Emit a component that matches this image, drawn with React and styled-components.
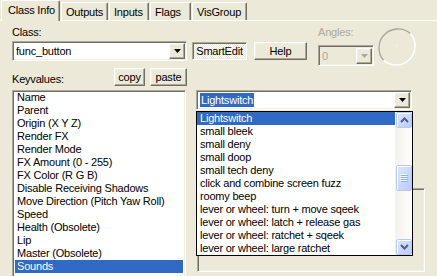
import React from 'react';
import styled, { createGlobalStyle, css } from 'styled-components';

const Global = createGlobalStyle`
  html, body { margin: 0; padding: 0; background: #ECE9D8; overflow: hidden; }
  body { font-family: "Liberation Sans", Arial, sans-serif; font-size: 11px; letter-spacing: -0.2px; color: #000; }
  #root { width: 437px; height: 276px; overflow: hidden; }
`;

const raised = css`
  border: 1px solid;
  border-color: #fff #716F64 #716F64 #fff;
  box-shadow: inset -1px -1px #ACA899, inset 1px 1px #F1EFE2;
  background: #ECE9D8;
`;

const sunken = css`
  border: 1px solid;
  border-color: #ACA899 #fff #fff #ACA899;
  box-shadow: inset 1px 1px #716F64, inset -1px -1px #F1EFE2;
`;

const Window = styled.div`
  width: 437px;
  height: 276px;
  overflow: hidden;
  background: #ECE9D8;
  box-sizing: border-box;
  * { box-sizing: border-box; }
`;

const TabStrip = styled.div`
  display: flex;
  align-items: flex-end;
  height: 21px;
  border-bottom: 1px solid #fff;
`;

const Tab = styled.div`
  width: ${p => p.$w}px;
  margin-left: ${p => p.$ml}px;
  height: ${p => (p.$active ? 21 : 18)}px;
  margin-bottom: ${p => (p.$active ? -1 : 0)}px;
  padding-left: ${p => (p.$active ? 6 : 4)}px;
  padding-top: 2px;
  line-height: 14px;
  font-size: 11px;
  white-space: nowrap;
  background: #ECE9D8;
  border-top: 1px solid #fff;
  border-left: 1px solid #fff;
  border-right: 1px solid #716F64;
  border-radius: 2px 2px 0 0;
  box-shadow: inset -1px 0 #ACA899;
  position: relative;
  z-index: ${p => (p.$active ? 1 : 0)};
`;

const Panel = styled.div`
  padding-left: 12px;
`;

const TopRow = styled.div`
  display: flex;
  align-items: flex-start;
  margin-top: 5px;
  height: 42px;
`;

const Field = styled.div`
  display: flex;
  flex-direction: column;
  width: ${p => p.$w}px;
  margin-left: ${p => p.$ml || 0}px;
`;

const Label = styled.div`
  height: 13px;
  line-height: 13px;
  margin-bottom: ${p => p.$mb || 2}px;
  color: ${p => (p.$disabled ? '#ACA899' : '#000')};
  white-space: nowrap;
`;

const Combo = styled.div`
  ${sunken};
  display: flex;
  align-items: center;
  height: ${p => p.$h || 20}px;
  width: ${p => (p.$w ? p.$w + 'px' : '100%')};
  background: ${p => (p.$disabled ? '#ECE9D8' : '#fff')};
  padding: 2px;
  color: ${p => (p.$disabled ? '#ACA899' : '#000')};
`;

const ComboText = styled.div`
  flex: 1;
  line-height: 14px;
  padding-left: 1px;
  white-space: nowrap;
  overflow: hidden;
`;

const Selected = styled.span`
  background: #316AC5;
  color: #fff;
  padding: 0 1px;
  display: inline-block;
  line-height: 14px;
`;

const ArrowBtn = styled.div`
  ${raised};
  width: 16px;
  height: 16px;
  flex: none;
  display: flex;
  align-items: center;
  justify-content: center;
  margin-right: -1px;
`;

const Button = styled.div`
  ${raised};
  width: ${p => p.$w}px;
  height: 18px;
  margin-left: ${p => p.$ml || 0}px;
  margin-top: ${p => p.$mt || 0}px;
  display: flex;
  align-items: center;
  justify-content: center;
  line-height: 14px;
  flex: none;
`;

const ToggleButton = styled(Button)`
  ${sunken};
  background: repeating-conic-gradient(#fff 0 25%, #ECE9D8 0 50%) 0 0 / 2px 2px;
`;

const Dial = styled.svg`
  margin-left: 3px;
  margin-top: 1px;
  flex: none;
`;

const Lower = styled.div`
  display: grid;
  grid-template-columns: 175px 229px;
  column-gap: 9px;
  row-gap: 4px;
`;

const KvHeader = styled.div`
  display: flex;
  align-items: center;
  height: 18px;
  gap: 5px;
`;

const KvLabel = styled.div`
  flex: 1;
  padding-top: 4px;
`;

const List = styled.div`
  ${sunken};
  background: #fff;
  width: 174px;
  height: 192px;
  padding: 0 2px;
  overflow: hidden;
`;

const Item = styled.div`
  height: 13px;
  line-height: 13px;
  padding-left: ${p => p.$pl || 2}px;
  white-space: nowrap;
  overflow: hidden;
  background: ${p => (p.$sel ? '#316AC5' : 'transparent')};
  color: ${p => (p.$sel ? '#fff' : '#000')};
`;

const RightCol = styled.div`
  position: relative;
  display: flex;
  flex-direction: column;
`;

const CommentBox = styled.div`
  ${sunken};
  margin-top: 78px;
  margin-left: 1px;
  width: 228px;
  height: 84px;
  background: #ECE9D8;
`;

const Dropdown = styled.div`
  position: absolute;
  left: 0;
  top: 21px;
  width: 217px;
  height: 145px;
  border: 1px solid #000;
  background: #fff;
  display: flex;
  z-index: 2;
`;

const DropItems = styled.div`
  width: 198px;
  display: flex;
  flex-direction: column;
`;

const Scroll = styled.div`
  width: 17px;
  display: flex;
  flex-direction: column;
  background: linear-gradient(to right, #F3F1EC, #FEFEFB);
  padding-left: 1px;
`;

const ScrollBtn = styled.div`
  height: 16px;
  width: 16px;
  border: 1px solid #B7CAF5;
  border-radius: 2px;
  background: linear-gradient(to bottom right, #DCE6FD, #B9CCF9);
  box-shadow: inset 1px 1px #fff;
  display: flex;
  align-items: center;
  justify-content: center;
  flex: none;
`;

const Thumb = styled(ScrollBtn)`
  height: 26px;
  margin-top: 37px;
  margin-bottom: auto;
`;

const ChevronUp = () => (
  <svg width="9" height="6" viewBox="0 0 9 6">
    <path d="M1 5 L4.5 1.5 L8 5" fill="none" stroke="#4D6185" strokeWidth="2" />
  </svg>
);
const ChevronDown = () => (
  <svg width="9" height="6" viewBox="0 0 9 6">
    <path d="M1 1 L4.5 4.5 L8 1" fill="none" stroke="#4D6185" strokeWidth="2" />
  </svg>
);
const Grip = () => (
  <svg width="8" height="8" viewBox="0 0 8 8">
    {[0, 2, 4, 6].map(y => (
      <g key={y}>
        <rect x="0" y={y} width="7" height="1" fill="#EEF4FE" />
        <rect x="1" y={y + 1} width="7" height="1" fill="#8CB0F8" />
      </g>
    ))}
  </svg>
);

const Tri = ({ color = '#000' }) => (
  <svg width="7" height="4" viewBox="0 0 7 4">
    <path d="M0 0 H7 L3.5 4 Z" fill={color} />
  </svg>
);

const keys = [
  'Name', 'Parent', 'Origin (X Y Z)', 'Render FX', 'Render Mode', 'FX Amount (0 - 255)',
  'FX Color (R G B)', 'Disable Receiving Shadows', 'Move Direction (Pitch Yaw Roll)', 'Speed',
  'Health (Obsolete)', 'Lip', 'Master (Obsolete)', 'Sounds',
];

const sounds = [
  'Lightswitch', 'small bleek', 'small deny', 'small doop', 'small tech deny',
  'click and combine screen fuzz', 'roomy beep', 'lever or wheel: turn + move sqeek',
  'lever or wheel: latch + release gas', 'lever or wheel: ratchet + sqeek',
  'lever or wheel: large ratchet',
];

export default function App() {
  return (
    <Window>
      <Global />
      <TabStrip>
        <Tab $active $w={59} $ml={1}>Class Info</Tab>
        <Tab $w={47} $ml={1}>Outputs</Tab>
        <Tab $w={40} $ml={1}>Inputs</Tab>
        <Tab $w={41} $ml={1}>Flags</Tab>
        <Tab $w={55} $ml={1}>VisGroup</Tab>
      </TabStrip>
      <Panel>
        <TopRow>
          <Field $w={175}>
            <Label>Class:</Label>
            <Combo>
              <ComboText>func_button</ComboText>
              <ArrowBtn><Tri /></ArrowBtn>
            </Combo>
          </Field>
          <ToggleButton $w={55} $ml={5} $mt={16}>SmartEdit</ToggleButton>
          <Button $w={53} $ml={7} $mt={16}>Help</Button>
          <Field $w={56} $ml={11}>
            <Label $disabled $mb={6}>Angles:</Label>
            <Combo $disabled $h={21}>
              <ComboText>0</ComboText>
              <ArrowBtn><Tri color="#ACA899" /></ArrowBtn>
            </Combo>
          </Field>
          <Dial width="40" height="40" viewBox="0 0 40 40">
            <path d="M33.4 6.6 A19 19 0 0 0 6.6 33.4" fill="none" stroke="#A7A59B" strokeWidth="1.3" />
            <path d="M6.6 33.4 A19 19 0 0 0 33.4 6.6" fill="none" stroke="#fff" strokeWidth="1.5" />
            <rect x="19.5" y="18.5" width="1" height="1" fill="#fff" />
          </Dial>
        </TopRow>
        <Lower>
          <KvHeader>
            <KvLabel>Keyvalues:</KvLabel>
            <Button $w={31}>copy</Button>
            <Button $w={37}>paste</Button>
          </KvHeader>
          <div />
          <List>
            {keys.map(k => (
              <Item key={k} $sel={k === 'Sounds'}>{k}</Item>
            ))}
          </List>
          <RightCol>
            <Combo $w={216}>
              <ComboText><Selected>Lightswitch</Selected></ComboText>
              <ArrowBtn><Tri /></ArrowBtn>
            </Combo>
            <CommentBox />
            <Dropdown>
              <DropItems>
                {sounds.map(s => (
                  <Item key={s} $pl={3} $sel={s === 'Lightswitch'}>{s}</Item>
                ))}
              </DropItems>
              <Scroll>
                <ScrollBtn><ChevronUp /></ScrollBtn>
                <Thumb><Grip /></Thumb>
                <ScrollBtn><ChevronDown /></ScrollBtn>
              </Scroll>
            </Dropdown>
          </RightCol>
        </Lower>
      </Panel>
    </Window>
  );
}
